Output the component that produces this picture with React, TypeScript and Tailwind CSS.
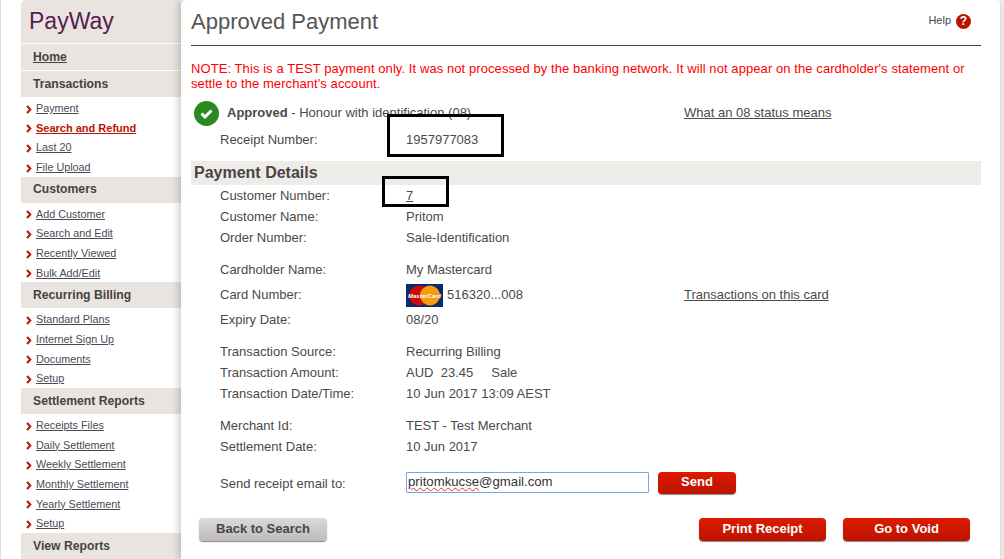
import React from "react";

const font = { fontFamily: '"Liberation Sans", Arial, sans-serif' };

function Chevron() {
  return (
    <svg width="6" height="9" viewBox="0 0 6 9" className="shrink-0 mt-[2px]">
      <path d="M1 1 L4.3 4.5 L1 8" fill="none" stroke="#b81400" strokeWidth="2" />
    </svg>
  );
}

function NavHead({ children, link }: { children: React.ReactNode; link?: boolean }) {
  return (
    <div className={`h-[26px] shrink-0 bg-[#e9e4df] pl-[12px] flex items-center text-[12.2px] font-bold text-[#444] ${link ? "underline" : ""}`}>
      {children}
    </div>
  );
}

function NavGroup({ children }: { children: React.ReactNode }) {
  return <div className="pt-[1px] shrink-0">{children}</div>;
}

function NavItem({ label, active }: { label: string; active?: boolean }) {
  return (
    <div className="h-[19.67px] flex items-center pl-[5px] pt-[0.8px] gap-[4px]">
      <Chevron />
      <span className={`underline ${active ? "text-[11px] font-bold text-[#b81400]" : "text-[10.8px] text-[#4a4a55]"}`}>{label}</span>
    </div>
  );
}

function Row({ label, h = 21, children, right }: { label: string; h?: number; children?: React.ReactNode; right?: string }) {
  return (
    <div className="flex items-center pl-[29px] pt-[1px]" style={{ height: h }}>
      <div className="w-[186px] shrink-0">{label}</div>
      <div className="w-[278px] shrink-0 flex items-center gap-[4px]">{children}</div>
      {right && <span className="underline">{right}</span>}
    </div>
  );
}

function Btn({ children, w, h = 23, grey }: { children: React.ReactNode; w: number; h?: number; grey?: boolean }) {
  return (
    <div
      className={`flex items-center justify-center rounded-[4px] pb-[2px] text-[13px] font-bold shadow-[0_1px_1px_#888] ${
        grey ? "bg-gradient-to-b from-[#dbdad8] to-[#bdbcba] text-[#4a4444]" : "bg-gradient-to-b from-[#dd1a00] to-[#bb1400] text-white"
      }`}
      style={{ width: w, height: h }}
    >
      {children}
    </div>
  );
}

function MasterCard() {
  return (
    <svg width="37" height="23" viewBox="0 0 37 23" className="shrink-0">
      <rect width="37" height="23" fill="#0a2a6c" />
      <circle cx="13" cy="11.5" r="10" fill="#cc0a0a" />
      <circle cx="24" cy="11.5" r="10" fill="#f79a0c" />
      <text x="18.5" y="13.5" textAnchor="middle" fontSize="6" fontWeight="700" fontStyle="italic" fill="#fff" fontFamily="Liberation Sans">MasterCard</text>
    </svg>
  );
}

export default function App() {
  return (
    <div className="relative flex w-[1004px] h-[559px] overflow-hidden bg-white border-l border-[#dddddd]" style={font}>
      <aside className="ml-[20px] w-[160px] shrink-0 flex flex-col">
        <div className="h-[43px] shrink-0 bg-[#e9e4df] rounded-tl-[5px] pl-[8px] flex items-center text-[23px] text-[#5a1a52]">PayWay</div>
        <div className="h-[1px] shrink-0" />
        <NavHead link>Home</NavHead>
        <div className="h-[1px] shrink-0" />
        <NavHead>Transactions</NavHead>
        <NavGroup>
          <NavItem label="Payment" />
          <NavItem label="Search and Refund" active />
          <NavItem label="Last 20" />
          <NavItem label="File Upload" />
        </NavGroup>
        <NavHead>Customers</NavHead>
        <NavGroup>
          <NavItem label="Add Customer" />
          <NavItem label="Search and Edit" />
          <NavItem label="Recently Viewed" />
          <NavItem label="Bulk Add/Edit" />
        </NavGroup>
        <NavHead>Recurring Billing</NavHead>
        <NavGroup>
          <NavItem label="Standard Plans" />
          <NavItem label="Internet Sign Up" />
          <NavItem label="Documents" />
          <NavItem label="Setup" />
        </NavGroup>
        <NavHead>Settlement Reports</NavHead>
        <NavGroup>
          <NavItem label="Receipts Files" />
          <NavItem label="Daily Settlement" />
          <NavItem label="Weekly Settlement" />
          <NavItem label="Monthly Settlement" />
          <NavItem label="Yearly Settlement" />
          <NavItem label="Setup" />
        </NavGroup>
        <NavHead>View Reports</NavHead>
      </aside>

      <main className="relative z-10 w-[819px] shrink-0 bg-white rounded-t-[6px] shadow-[-2px_0_8px_rgba(0,0,0,0.22)] px-[10px] text-[13px] text-[#4a4a4a]">
        <div className="w-[790px]">
          <div className="h-[46px] border-b border-[#444] flex items-start justify-between">
            <h1 className="text-[22px] text-[#555] mt-[8px] leading-[28px]">Approved Payment</h1>
            <div className="flex items-center gap-[5px] mt-[12px] mr-[10px]">
              <span className="text-[11px] text-[#4a4a55] mb-[2px]">Help</span>
              <span className="w-[15px] h-[15px] rounded-full bg-[#b81400] text-white text-[12px] font-bold flex items-center justify-center">?</span>
            </div>
          </div>

          <p className="mt-[15px] text-[13px] leading-[15px] tracking-[0.08px] text-[#ff0000]">
            NOTE: This is a TEST payment only. It was not processed by the banking network. It will not appear on the cardholder's statement or settle to the merchant's account.
          </p>

          <div className="mt-[9px] h-[26px] flex items-center pl-[3px]">
            <svg width="25" height="25" viewBox="0 0 25 25" className="shrink-0">
              <circle cx="12.5" cy="12.5" r="12.5" fill="#2a8a20" />
              <path d="M7.5 12.5 L11 16 L17.5 9.5" fill="none" stroke="#fff" strokeWidth="3" />
            </svg>
            <span className="ml-[8px] w-[457px]"><b>Approved</b> - Honour with identification (08)</span>
            <span className="underline">What an 08 status means</span>
          </div>
          <div className="mt-[3px]"><Row label="Receipt Number:"><span>1957977083</span></Row></div>

          <div className="mt-[11px] h-[24px] bg-[#eeece9] pl-[3px] flex items-center text-[16px] font-bold text-[#4a4444]">Payment Details</div>

          <Row label="Customer Number:"><span className="underline">7</span></Row>
          <Row label="Customer Name:">Pritom</Row>
          <Row label="Order Number:">Sale-Identification</Row>

          <div className="h-[9px]" />
          <Row label="Cardholder Name:" h={25}>My Mastercard</Row>
          <Row label="Card Number:" h={25} right="Transactions on this card"><MasterCard />516320...008</Row>
          <Row label="Expiry Date:" h={25}>08/20</Row>

          <div className="h-[9px]" />
          <Row label="Transaction Source:">Recurring Billing</Row>
          <Row label="Transaction Amount:"><span className="whitespace-pre">AUD  23.45     Sale</span></Row>
          <Row label="Transaction Date/Time:">10 Jun 2017 13:09 AEST</Row>

          <div className="h-[11px]" />
          <Row label="Merchant Id:">TEST - Test Merchant</Row>
          <Row label="Settlement Date:">10 Jun 2017</Row>

          <div className="mt-[14px] flex items-center pl-[29px] h-[23px]">
            <div className="w-[186px] shrink-0 pt-[2px]">Send receipt email to:</div>
            <div className="w-[243px] h-[21px] shrink-0 border border-[#7da2e8] rounded-[1px] pl-[1px] pb-[2px] flex items-center text-[13.2px] text-[#333]">
              <span className="underline decoration-wavy decoration-[#e03030] decoration-[1px]">pritomkucse</span>@gmail.com
            </div>
            <div className="ml-[9px]"><Btn w={78} h={22}>Send</Btn></div>
          </div>

          <div className="mt-[24px] flex items-center pl-[8px]">
            <Btn w={128} grey>Back to Search</Btn>
            <div className="ml-[372px]"><Btn w={127}>Print Receipt</Btn></div>
            <div className="ml-[17px]"><Btn w={127}>Go to Void</Btn></div>
          </div>
        </div>
      </main>
      <div className="flex-1 bg-[#eeeeee]" />

      <div className="absolute z-20 left-[386px] top-[114px] w-[117px] h-[43px] border-[3px] border-black" />
      <div className="absolute z-20 left-[381px] top-[176px] w-[67px] h-[31px] border-[3px] border-black" />
    </div>
  );
}
